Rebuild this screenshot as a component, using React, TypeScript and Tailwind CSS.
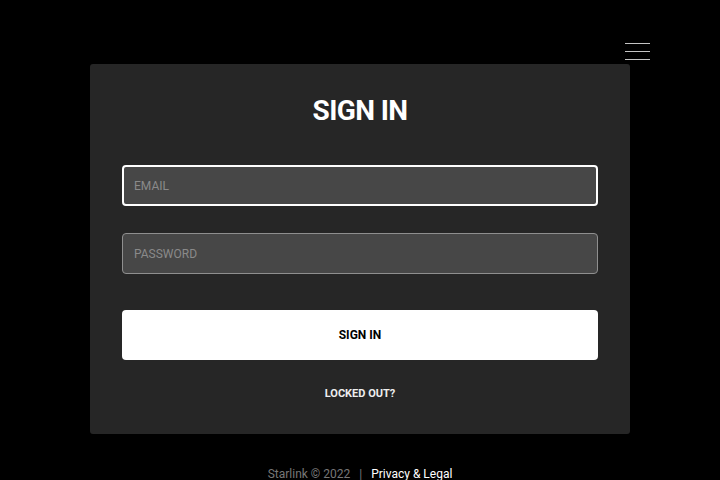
import React from "react";

export default function App() {
  return (
    <div className="min-h-[480px] w-full bg-black text-white" style={{ fontFamily: "Roboto, 'Liberation Sans', sans-serif" }}>
      <div className="flex h-[64px] items-start justify-end pr-[70px] pt-[43px]">
        <div className="flex w-[25px] flex-col gap-[7px]">
          <div className="h-[1px] w-full bg-[#c4c4c4]" />
          <div className="h-[1px] w-full bg-[#c4c4c4]" />
          <div className="h-[1px] w-full bg-[#c4c4c4]" />
        </div>
      </div>
      <div className="mx-auto flex h-[370px] w-[540px] flex-col items-center rounded-[3px] bg-[#262626] px-[32px] pt-[29px]">
        <h1 className="text-[28px] font-bold leading-[36px] tracking-[-0.6px] text-white">SIGN IN</h1>
        <div className="mt-[36px] flex h-[41px] w-full items-center rounded-[4px] border-2 border-white bg-[#474747] px-[10px] text-[12px] text-[#8a8a8a]">
          EMAIL
        </div>
        <div className="mt-[27px] flex h-[41px] w-full items-center rounded-[4px] border border-[#8f8f8f] bg-[#474747] px-[11px] text-[12px] text-[#8a8a8a]">
          PASSWORD
        </div>
        <button className="mt-[36px] flex h-[50px] w-full items-center justify-center rounded-[4px] bg-white text-[12px] font-bold text-black">
          SIGN IN
        </button>
        <div className="mt-[27px] text-[11px] font-bold leading-[14px] text-[#eeeeee]">LOCKED OUT?</div>
      </div>
      <div className="mt-[32px] flex justify-center gap-[9px] text-[12px] leading-[16px]">
        <span className="text-[#777777]">Starlink © 2022</span>
        <span className="text-[#777777]">|</span>
        <span className="text-white">Privacy &amp; Legal</span>
      </div>
    </div>
  );
}
